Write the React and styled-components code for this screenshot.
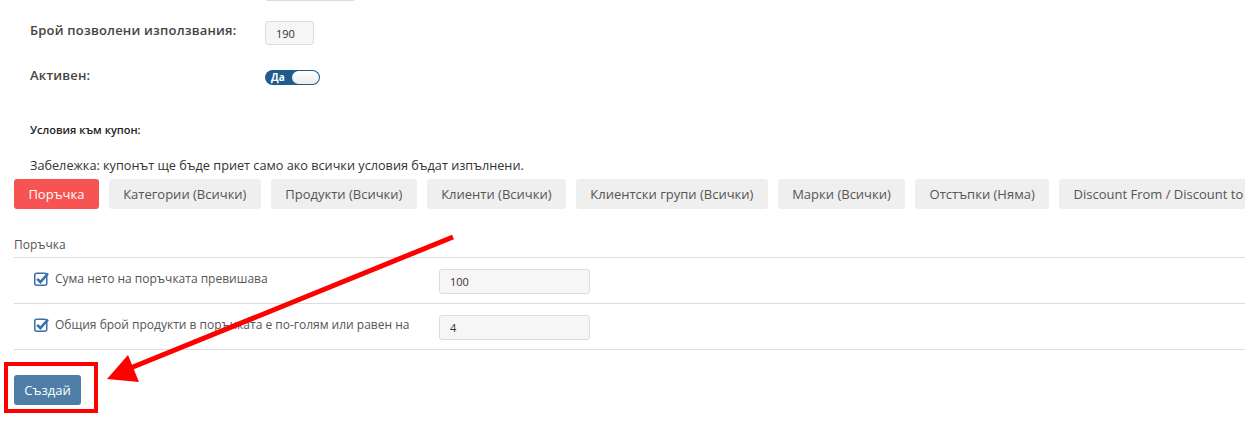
import React from 'react';
import styled, { createGlobalStyle } from 'styled-components';

const GlobalStyle = createGlobalStyle`
  html, body {
    margin: 0;
    padding: 0;
    background: #fff;
    font-family: "Open Sans", "Liberation Sans", sans-serif;
    color: #333;
  }
`;

const Page = styled.div`
  position: relative;
  width: 1245px;
  height: 430px;
  overflow: hidden;
`;

const Form = styled.div`
  display: flex;
  flex-direction: column;
  padding-left: 30px;
  margin-top: -33px;
`;

const FieldRow = styled.div`
  display: flex;
  align-items: center;
  height: ${(p) => p.h || 44}px;
`;

const FieldLabel = styled.div`
  width: 235px;
  font-size: 13px;
  font-weight: 600;
  letter-spacing: 0.2px;
  color: #444;
  margin-top: ${(p) => p.shift || 0}px;
`;

const SmallInput = styled.div`
  box-sizing: border-box;
  width: ${(p) => p.w}px;
  height: 24px;
  display: flex;
  align-items: center;
  padding-left: 10px;
  background: #f6f6f6;
  border: 1px solid #dcdcdc;
  border-radius: 3px;
  font-size: 11px;
  color: #333;
`;

const Toggle = styled.div`
  box-sizing: border-box;
  width: 55px;
  height: 15px;
  border-radius: 8px;
  background: #1f5b8c;
  display: flex;
  align-items: center;
  justify-content: space-between;
  padding: 0 1px 0 6px;
  margin-top: 2px;
`;

const ToggleText = styled.span`
  font-size: 10px;
  font-weight: 700;
  color: #fff;
  line-height: 1;
`;

const Knob = styled.span`
  width: 27px;
  height: 13px;
  border-radius: 7px;
  background: linear-gradient(#ffffff, #ececec);
`;

const Heading = styled.div`
  margin-top: 25px;
  font-size: 11px;
  font-weight: 600;
  color: #222;
  height: 16px;
  line-height: 16px;
`;

const Note = styled.div`
  margin-top: 18px;
  font-size: 12.7px;
  color: #333;
  height: 18px;
  line-height: 18px;
`;

const Tabs = styled.div`
  display: flex;
  gap: 10px;
  padding-left: 14px;
  margin-top: 5px;
  white-space: nowrap;
`;

const Tab = styled.div`
  flex: none;
  height: 30px;
  display: flex;
  align-items: center;
  padding: 0 14.4px;
  border-radius: 3px;
  font-size: 13px;
  background: ${(p) => (p.active ? '#f75353' : '#efefef')};
  color: ${(p) => (p.active ? '#fff' : '#555')};
`;

const Section = styled.div`
  margin-left: 14px;
  margin-top: 26px;
`;

const SectionTitle = styled.div`
  font-size: 12px;
  color: #555;
  height: 22px;
  line-height: 19px;
  border-bottom: 1px solid #dddddd;
`;

const CondRow = styled.div`
  display: flex;
  align-items: center;
  height: 45px;
  border-bottom: 1px solid #dddddd;
  padding-left: 20px;
`;

const CondLabel = styled.label`
  width: 405px;
  display: flex;
  align-items: center;
  gap: 5px;
  font-size: 12px;
  color: #555;
  margin-top: -4px;
`;

const CondInput = styled(SmallInput)`
  height: 25px;
  margin-top: 2px;
`;

const Actions = styled.div`
  padding: 25px 0 0 14px;
`;

const Button = styled.button`
  width: 67px;
  height: 30px;
  border: none;
  border-radius: 3px;
  background: #4e7ea6;
  color: #fff;
  font-family: "Open Sans", "Liberation Sans", sans-serif;
  font-size: 13px;
  padding: 0;
`;

const Highlight = styled.div`
  position: absolute;
  left: 4px;
  top: 362px;
  width: 94px;
  height: 51px;
  box-sizing: border-box;
  border: 4px solid #ff0000;
`;

const Arrow = styled.svg`
  position: absolute;
  left: 0;
  top: 0;
  pointer-events: none;
`;

const Check = () => (
  <svg width="16" height="15" viewBox="0 0 16 15">
    <rect x="0.75" y="2.25" width="12" height="12" rx="2" fill="#fff" stroke="#3b6fa8" strokeWidth="1.5" />
    <path d="M3.2 7.8 L6.4 11 L14 2.5" fill="none" stroke="#3b6fa8" strokeWidth="2.6" />
  </svg>
);

const tabs = [
  'Категории (Всички)',
  'Продукти (Всички)',
  'Клиенти (Всички)',
  'Клиентски групи (Всички)',
  'Марки (Всички)',
  'Отстъпки (Няма)',
  'Discount From / Discount to',
];

export default function App() {
  return (
    <Page>
      <GlobalStyle />
      <Form>
        <FieldRow>
          <FieldLabel />
          <SmallInput w={91} />
        </FieldRow>
        <FieldRow>
          <FieldLabel shift={-6}>Брой позволени използвания:</FieldLabel>
          <SmallInput w={49}>190</SmallInput>
        </FieldRow>
        <FieldRow h={42}>
          <FieldLabel shift={-2}>Активен:</FieldLabel>
          <Toggle>
            <ToggleText>Да</ToggleText>
            <Knob />
          </Toggle>
        </FieldRow>
        <Heading>Условия към купон:</Heading>
        <Note>Забележка: купонът ще бъде приет само ако всички условия бъдат изпълнени.</Note>
      </Form>
      <Tabs>
        <Tab active>Поръчка</Tab>
        {tabs.map((t) => (
          <Tab key={t}>{t}</Tab>
        ))}
      </Tabs>
      <Section>
        <SectionTitle>Поръчка</SectionTitle>
        <CondRow>
          <CondLabel>
            <Check />
            Сума нето на поръчката превишава
          </CondLabel>
          <CondInput w={151}>100</CondInput>
        </CondRow>
        <CondRow>
          <CondLabel>
            <Check />
            Общия брой продукти в поръчката е по-голям или равен на
          </CondLabel>
          <CondInput w={151}>4</CondInput>
        </CondRow>
      </Section>
      <Actions>
        <Button>Създай</Button>
      </Actions>
      <Highlight />
      <Arrow width="1245" height="430">
        <line x1="453" y1="237" x2="128" y2="369" stroke="#ff0000" strokeWidth="5" />
        <polygon points="107,379 128,355 139,382" fill="#ff0000" />
      </Arrow>
    </Page>
  );
}
